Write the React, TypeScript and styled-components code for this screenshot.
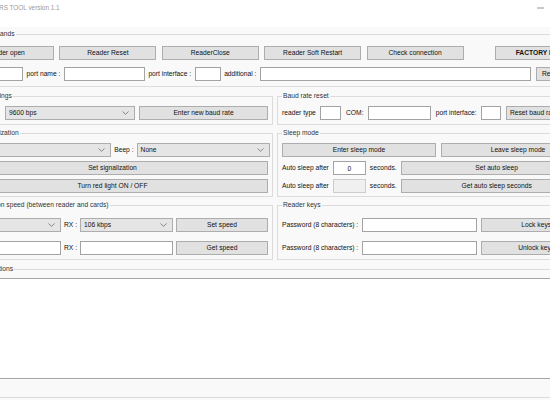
import React from "react";
import styled, { createGlobalStyle } from "styled-components";

const GlobalStyle = createGlobalStyle`
  html, body { margin: 0; padding: 0; background: #f9f9f9; }
  body {
    font-family: "Liberation Sans", Arial, sans-serif;
    font-size: 6.7px;
    color: #111;
  }
  * { box-sizing: border-box; }
`;

const Viewport = styled.div`
  width: 550px;
  height: 400px;
  overflow: hidden;
  background: #f9f9f9;
`;

const Window = styled.div`
  margin-left: -50px;
  width: 655px;
  display: flex;
  flex-direction: column;
`;

const TitleBar = styled.div`
  height: 27px;
  background: #ffffff;
  display: flex;
  align-items: flex-start;
  padding-left: 27px;
`;

const Title = styled.span`
  flex: 1;
  margin-top: 4px;
  line-height: 8px;
  font-size: 6.4px;
  color: #9a9a9a;
  white-space: nowrap;
`;

const CaptionButton = styled.div`
  width: 26px;
  height: 15px;
  display: flex;
  align-items: center;
  justify-content: center;
`;

const Body = styled.div`
  padding: 3px 5px 0 2px;
  display: flex;
  flex-direction: column;
  gap: 5px;
`;

const Columns = styled.div`
  display: grid;
  grid-template-columns: 321px 1fr;
  column-gap: 4px;
  row-gap: 4px;
`;

const Group = styled.fieldset<{ $pt: number; $pb: number }>`
  margin: 0;
  min-width: 0;
  border: 1px solid #dcdcdc;
  padding: ${(p) => p.$pt}px 4px ${(p) => p.$pb}px 4px;
  display: flex;
  flex-direction: column;
`;

const Legend = styled.legend`
  padding: 0 1px;
  margin: 0;
  line-height: 8px;
  font-size: 6.7px;
  color: #333;
  white-space: nowrap;
`;

const Stack = styled.div<{ $gap: number }>`
  display: flex;
  flex-direction: column;
  gap: ${(p) => p.$gap}px;
`;

const Row = styled.div<{ $gap: number }>`
  display: flex;
  align-items: center;
  gap: ${(p) => p.$gap}px;
  height: 14px;
`;

const Label = styled.span<{ $push?: boolean }>`
  flex: none;
  line-height: 14px;
  white-space: nowrap;
  margin-right: ${(p) => (p.$push ? "auto" : "0")};
`;

const Button = styled.button<{ $w?: number; $bold?: boolean; $ml?: number }>`
  flex: none;
  height: 14px;
  width: ${(p) => (p.$w ? `${p.$w}px` : "100%")};
  margin: 0 0 0 ${(p) => p.$ml ?? 0}px;
  padding: 0;
  background: #e1e1e1;
  border: 1px solid #adadad;
  border-radius: 0;
  font-family: inherit;
  font-size: 6.7px;
  font-weight: ${(p) => (p.$bold ? 700 : 400)};
  color: #111;
  line-height: 12px;
  text-align: center;
  white-space: nowrap;
  overflow: hidden;
`;

const TextBox = styled.input<{ $w: number; $center?: boolean }>`
  flex: none;
  height: 14px;
  width: ${(p) => p.$w}px;
  margin: 0;
  padding: 0 2px;
  background: #ffffff;
  border: 1px solid #a3a3a3;
  border-radius: 0;
  font-family: inherit;
  font-size: 6.7px;
  color: #111;
  text-align: ${(p) => (p.$center ? "center" : "left")};
  outline: none;
  &:disabled {
    background: #f0f0f0;
    border-color: #cccccc;
  }
`;

const Combo = styled.div<{ $w: number }>`
  flex: none;
  height: 14px;
  width: ${(p) => p.$w}px;
  display: flex;
  align-items: center;
  justify-content: space-between;
  padding: 0 5px 0 3px;
  background: #e5e5e5;
  border: 1px solid #adadad;
  line-height: 12px;
  white-space: nowrap;
`;

const ListBox = styled.div`
  height: 101px;
  background: #ffffff;
  border: 1px solid #a5a5a5;
`;

const Chevron = () => (
  <svg width="7" height="4" viewBox="0 0 7 4">
    <polyline points="0.5,0.5 3.5,3.3 6.5,0.5" fill="none" stroke="#707070" strokeWidth="0.8" />
  </svg>
);

const DropDown = ({ w, value }: { w: number; value?: string }) => (
  <Combo $w={w}>
    <span>{value ?? ""}</span>
    <Chevron />
  </Combo>
);

export default function App() {
  return (
    <>
      <GlobalStyle />
      <Viewport>
        <Window>
          <TitleBar>
            <Title>READERS TOOL version 1.1</Title>
            <CaptionButton>
              <svg width="7" height="2" viewBox="0 0 7 2">
                <line x1="0" y1="1" x2="7" y2="1" stroke="#777" strokeWidth="0.8" />
              </svg>
            </CaptionButton>
            <CaptionButton>
              <svg width="7" height="7" viewBox="0 0 7 7">
                <rect x="0.5" y="0.5" width="6" height="6" fill="none" stroke="#777" strokeWidth="0.8" />
              </svg>
            </CaptionButton>
            <CaptionButton>
              <svg width="7" height="7" viewBox="0 0 7 7">
                <path d="M0.5 0.5L6.5 6.5M6.5 0.5L0.5 6.5" stroke="#777" strokeWidth="0.8" />
              </svg>
            </CaptionButton>
          </TitleBar>

          <Body>
            <Group $pt={8} $pb={5}>
              <Legend>Reader commands</Legend>
              <Stack $gap={7}>
                <Row $gap={5.4}>
                  <Button $w={97}>Reader open</Button>
                  <Button $w={97}>Reader Reset</Button>
                  <Button $w={97}>ReaderClose</Button>
                  <Button $w={97}>Reader Soft Restart</Button>
                  <Button $w={97}>Check connection</Button>
                  <Button $w={97} $bold $ml={26}>FACTORY RESET</Button>
                </Row>
                <Row $gap={3.5}>
                  <Label>reader type :</Label>
                  <TextBox $w={25} readOnly />
                  <Label>port name :</Label>
                  <TextBox $w={81} readOnly />
                  <Label>port interface :</Label>
                  <TextBox $w={26} readOnly />
                  <Label>additional :</Label>
                  <TextBox $w={271} readOnly />
                  <Button $w={28} $ml={1.5}>Read</Button>
                </Row>
              </Stack>
            </Group>

            <Columns>
              <Group $pt={6} $pb={4}>
                <Legend>Baud rate settings</Legend>
                <Row $gap={4}>
                  <Label $push>Speed :</Label>
                  <DropDown w={130} value="9600 bps" />
                  <Button $w={129}>Enter new baud rate</Button>
                </Row>
              </Group>

              <Group $pt={6} $pb={4}>
                <Legend>Baud rate reset</Legend>
                <Row $gap={4.6}>
                  <Label>reader type</Label>
                  <TextBox $w={21} readOnly />
                  <Label>COM:</Label>
                  <TextBox $w={63} readOnly />
                  <Label>port interface:</Label>
                  <TextBox $w={20} readOnly />
                  <Button $w={56}>Reset baud rate</Button>
                </Row>
              </Group>

              <Group $pt={6} $pb={3}>
                <Legend>Reader signalization</Legend>
                <Stack $gap={4}>
                  <Row $gap={3}>
                    <Label $push>Light :</Label>
                    <DropDown w={133} />
                    <Label>Beep :</Label>
                    <DropDown w={133} value="None" />
                  </Row>
                  <Button>Set signalization</Button>
                  <Button>Turn red light ON / OFF</Button>
                </Stack>
              </Group>

              <Group $pt={6} $pb={3}>
                <Legend>Sleep mode</Legend>
                <Stack $gap={4}>
                  <Row $gap={5}>
                    <Button $w={154}>Enter sleep mode</Button>
                    <Button $w={154}>Leave sleep mode</Button>
                  </Row>
                  <Row $gap={4}>
                    <Label>Auto sleep after</Label>
                    <TextBox $w={33} $center readOnly defaultValue="0" />
                    <Label>seconds.</Label>
                    <Button $w={192}>Set auto sleep</Button>
                  </Row>
                  <Row $gap={4}>
                    <Label>Auto sleep after</Label>
                    <TextBox $w={33} $center disabled />
                    <Label>seconds.</Label>
                    <Button $w={192}>Get auto sleep seconds</Button>
                  </Row>
                </Stack>
              </Group>

              <Group $pt={9} $pb={4}>
                <Legend>Communication speed (between reader and cards)</Legend>
                <Stack $gap={9}>
                  <Row $gap={3}>
                    <Label $push>TX :</Label>
                    <DropDown w={80} />
                    <Label>RX :</Label>
                    <DropDown w={93} value="106 kbps" />
                    <Button $w={92}>Set speed</Button>
                  </Row>
                  <Row $gap={3}>
                    <Label $push>TX :</Label>
                    <TextBox $w={80} readOnly />
                    <Label>RX :</Label>
                    <TextBox $w={93} readOnly />
                    <Button $w={92}>Get speed</Button>
                  </Row>
                </Stack>
              </Group>

              <Group $pt={9} $pb={4}>
                <Legend>Reader keys</Legend>
                <Stack $gap={9}>
                  <Row $gap={4}>
                    <Label>Password (8 characters) :</Label>
                    <TextBox $w={115} readOnly />
                    <Button $w={110}>Lock keys</Button>
                  </Row>
                  <Row $gap={4}>
                    <Label>Password (8 characters) :</Label>
                    <TextBox $w={115} readOnly />
                    <Button $w={110}>Unlock keys</Button>
                  </Row>
                </Stack>
              </Group>
            </Columns>

            <Group $pt={5} $pb={18}>
              <Legend>Reader operations</Legend>
              <ListBox />
            </Group>
          </Body>
        </Window>
      </Viewport>
    </>
  );
}
